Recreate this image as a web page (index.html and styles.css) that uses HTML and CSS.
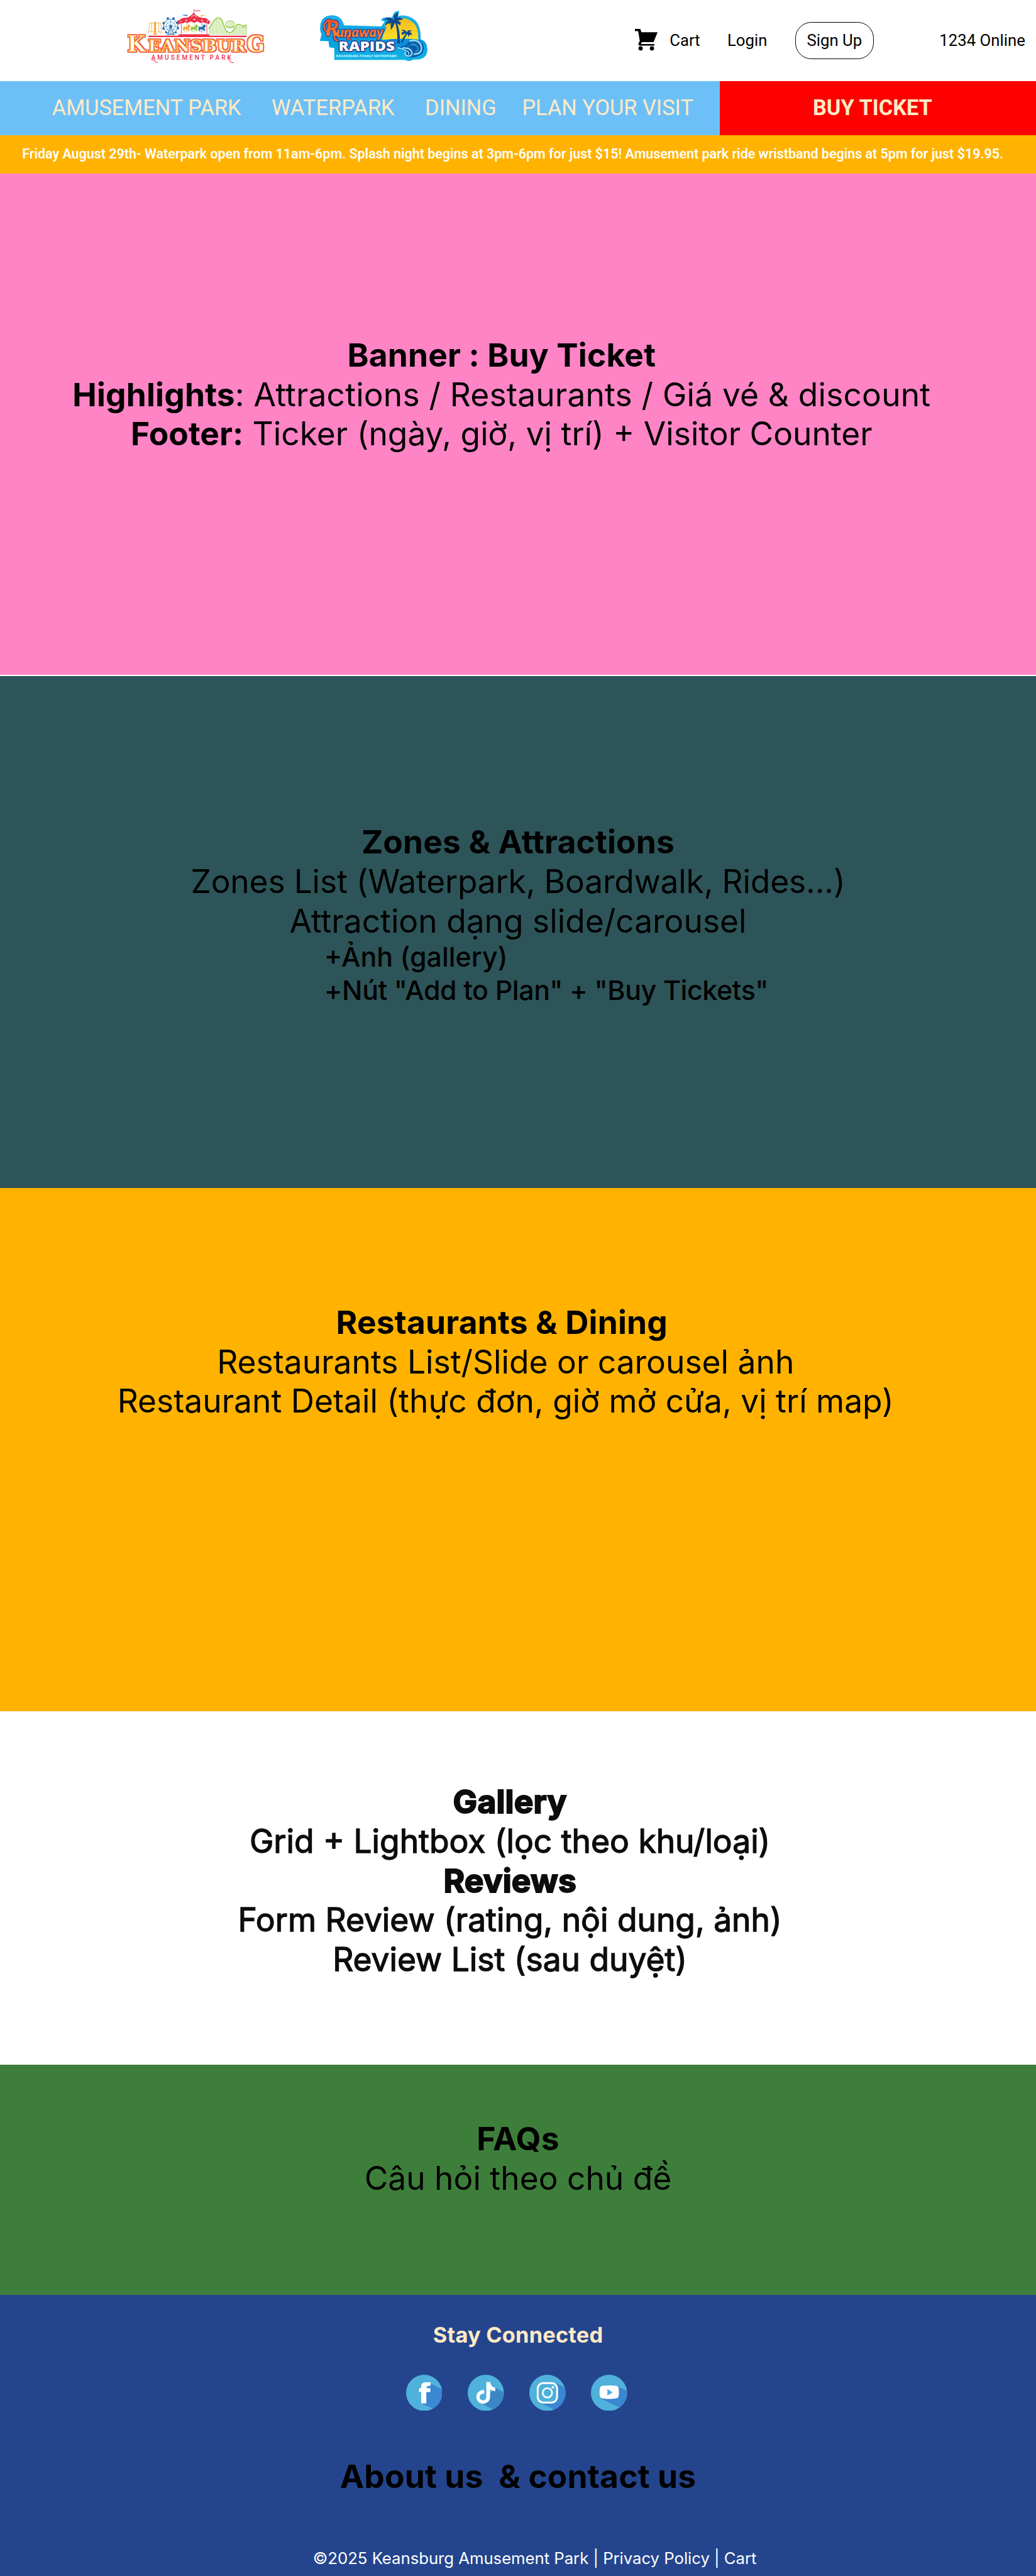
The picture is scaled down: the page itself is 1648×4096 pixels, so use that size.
FILE: index.html
```html
<!DOCTYPE html>
<html lang="vi">
<head>
<meta charset="utf-8">
<title>Keansburg Amusement Park</title>
<link rel="stylesheet" href="styles.css">
</head>
<body>
<header class="top">
  <svg class="logo-park" viewBox="100 45 785 310" role="img" aria-label="Keansburg Amusement Park">
    <defs>
      <filter id="red-rim" x="-5%" y="-10%" width="110%" height="120%"><feMorphology in="SourceAlpha" operator="dilate" radius="4"/><feComposite operator="in" in2="rim"/><feFlood flood-color="#ee3048" result="c"/><feMorphology in="SourceAlpha" operator="dilate" radius="4" result="d"/><feComposite in="c" in2="d" operator="in" result="r"/><feMerge><feMergeNode in="r"/><feMergeNode in="SourceGraphic"/></feMerge></filter>
    </defs>
    <!-- swing ride -->
    <g stroke="#f6a93b" fill="none" stroke-width="3">
      <path d="M228 128H300M263 120V190M232 128L228 178M244 128V176M284 128V176M295 128L300 178M214 176q10 8 22 0M236 174q8 8 18 0M274 174q8 8 18 0M286 180q10 8 20 0"/>
      <path d="M263 122V190" stroke-width="11"/><path d="M253 190H274" stroke-width="6"/>
    </g>
    <!-- ferris wheel -->
    <g stroke="#1f6cab" fill="none" stroke-width="3">
      <circle cx="350" cy="146" r="40"/><circle cx="350" cy="146" r="26" stroke-width="2"/>
      <path d="M350 146L332 194M350 146L369 194M330 192H373" stroke-width="4"/>
      <path d="M310 146H390M350 106V186M322 118L378 174M378 118L322 174" stroke-width="2"/>
    </g>
    <g fill="#1f6cab"><circle cx="350" cy="146" r="8"/><circle cx="334" cy="103" r="7"/><circle cx="366" cy="103" r="7"/><circle cx="386" cy="126" r="7"/><circle cx="311" cy="128" r="7"/><circle cx="310" cy="158" r="7"/><circle cx="390" cy="156" r="7"/><circle cx="325" cy="180" r="6"/><circle cx="378" cy="180" r="6"/></g>
    <!-- roller coaster -->
    <g stroke="#8dc63f" fill="none" stroke-width="3">
      <path d="M560 160C585 130 592 98 617 98C648 98 640 180 680 180C708 180 705 134 726 134C745 134 742 150 758 142Q765 138 773 140" stroke-width="5"/>
      <ellipse cx="680" cy="134" rx="24" ry="19" stroke-width="4"/><path d="M658 148Q680 160 702 148M744 150Q760 156 773 148"/>
      <path d="M566 155V194M573 145V194M581 133V194M589 120V194M597 109V194M605 102V194M613 100V194M621 100V194M629 104V194M637 122V194M645 142V194M653 160V194M661 172V194M669 118V154M677 116V154M685 116V154M693 120V154M669 180V194M677 182V194M685 182V194M693 178V194M701 158V194M709 146V194M717 138V194M725 136V194M733 138V194M741 146V194M749 148V194M757 144V194M765 142V194M772 142V194" stroke-width="2.5"/>
    </g>
    <!-- carousel -->
    <path d="M478 50V72M478 54L494 58L516 57L504 62L478 60" stroke="#ee3048" stroke-width="2" fill="none"/>
    <path d="M410 83L442 82V90L425 86ZM442 90V96" fill="#1f6cab"/><path d="M517 84L550 82L532 87L517 92Z" fill="#f6a93b"/>
    <path d="M478 68Q484 82 500 90Q510 98 530 99Q552 98 556 110L570 118L562 136L552 128L540 128L530 122L515 128L500 118L480 126L460 118L444 128L430 122L418 130L406 128L394 138L386 116L402 110Q406 98 430 98Q450 98 458 88Q472 82 478 68Z" fill="#ee3048"/>
    <path d="M465 96Q470 84 480 84Q490 84 494 96" fill="none" stroke="#fff" stroke-width="3"/>
    <g fill="#fff"><circle cx="437" cy="113" r="4"/><circle cx="481" cy="108" r="4"/><circle cx="524" cy="113" r="4"/><circle cx="407" cy="118" r="3"/><circle cx="554" cy="118" r="3"/></g>
    <path d="M409 128V188M551 128V188" stroke="#ee3048" stroke-width="3"/>
    <g stroke-width="2.5">
      <g stroke="#f6a93b" fill="#f6a93b"><path d="M438 126V182"/><path d="M416 156L424 148L434 152L444 148L448 136L457 140L457 150L451 152L450 162L456 166L450 172L444 162L428 162L424 168L430 174L424 172L419 164L424 154Z"/></g>
      <g stroke="#8dc63f" fill="#8dc63f"><path d="M481 126V182"/><path d="M459 156L467 148L477 152L487 148L491 136L500 140L500 150L494 152L493 162L499 166L493 172L487 162L471 162L467 168L473 174L467 172L462 164L467 154Z"/></g>
      <g stroke="#1f6cab" fill="#1f6cab"><path d="M524 126V182"/><path d="M502 156L510 148L520 152L530 148L534 136L543 140L543 150L537 152L536 162L542 166L536 172L530 162L514 162L510 168L516 174L510 172L505 164L510 154Z"/></g>
    </g>
    <path d="M226 198H394V190H564V198H771V206H226Z" fill="#ee3048"/>
    <g class="word" filter="url(#red-rim)"><text x="109" y="286" font-size="125" textLength="100" lengthAdjust="spacingAndGlyphs">K</text><text x="224" y="286" font-size="91" textLength="544" lengthAdjust="spacingAndGlyphs">EANSBUR</text><text x="773" y="286" font-size="125" textLength="100" lengthAdjust="spacingAndGlyphs">G</text></g>
    <g fill="#ee3048" class="tagline"><text x="242" y="332" font-size="35" textLength="298">AMUSEMENT</text><text x="567" y="332" font-size="35" textLength="120">PARK</text></g>
    <path d="M243 332Q258 332 262 340Q268 348 279 346M668 320Q676 348 702 349" fill="none" stroke="#ee3048" stroke-width="3.5"/>
  </svg>

  <svg class="logo-rapids" viewBox="95 55 605 290" role="img" aria-label="Runaway Rapids">
    <defs>
      <linearGradient id="sea" x1="0" y1="0" x2="0" y2="1"><stop offset="0" stop-color="#22b5ee"/><stop offset=".6" stop-color="#049fe0"/><stop offset="1" stop-color="#12b4e4"/></linearGradient>
      <linearGradient id="sun" x1="0" y1="0" x2="0" y2="1"><stop offset="0" stop-color="#f5b81c"/><stop offset="1" stop-color="#fbe02a"/></linearGradient>
      <linearGradient id="fire" gradientUnits="userSpaceOnUse" x1="0" y1="105" x2="0" y2="225"><stop offset="0" stop-color="#f04e23"/><stop offset="1" stop-color="#f8902a"/></linearGradient>
      <filter id="navy-rim" x="-10%" y="-20%" width="120%" height="140%"><feFlood flood-color="#283a8c" result="c"/><feMorphology in="SourceAlpha" operator="dilate" radius="4" result="d"/><feComposite in="c" in2="d" operator="in" result="r"/><feMerge><feMergeNode in="r"/><feMergeNode in="SourceGraphic"/></feMerge></filter>
    </defs>
    <path d="M98 226L108 188Q96 176 100 140Q106 86 165 84Q218 84 232 140L440 146L458 120L438 112L448 98L480 95L498 96L510 70Q520 58 540 61L532 88Q580 76 624 108Q660 140 658 218Q692 224 696 274Q694 326 640 330Q615 326 600 338Q585 340 570 332H178V266L150 262L146 228Z" fill="url(#sea)"/>
    <path d="M444 215Q446 200 468 154L456 138Q490 96 548 98Q640 108 645 190V220H444Z" fill="url(#sun)"/>
    <path d="M440 222Q540 208 640 218L650 250L530 262Z" fill="#0d8fd8"/>
    <g fill="#06498f">
      <path d="M516 122Q532 170 528 240H542Q546 170 524 120Z"/>
      <path d="M516 118Q498 88 462 100L455 112L474 106L470 114L488 112Q462 120 460 142L482 126L484 136L496 122Q488 140 494 166L508 142L512 128L530 130L544 140L548 124L530 114L562 106Q548 92 526 98Q538 78 530 66L512 82Q504 96 510 108Z"/>
      <path d="M580 184Q560 202 548 236H558Q572 204 586 186Z"/>
      <path d="M582 178Q566 156 550 168L568 174L552 180L554 194L574 184L574 196L586 188L590 206L598 190L610 196L606 180L594 178L612 168L588 168Z"/>
    </g>
    <path d="M526 258Q560 268 588 238Q620 208 656 228Q688 252 668 294Q640 322 590 318Q562 300 572 280Q550 264 526 258Z" fill="#0c5aa8"/>
    <g fill="none" stroke="#8fdcf8" stroke-linecap="round">
      <path d="M600 226Q650 216 662 256Q668 300 622 300" stroke-width="9"/>
      <path d="M608 242Q640 244 644 270Q642 284 630 284" stroke="#2f9fdd" stroke-width="6"/>
      <path d="M560 266Q600 262 610 290Q610 314 586 310Q566 304 574 288" stroke-width="8"/>
      <path d="M580 262Q608 240 634 256" stroke="#1c7fc8" stroke-width="6"/>
      <path d="M532 264Q558 270 582 282Q598 292 590 302" stroke="#fff" stroke-width="4"/>
    </g>
    <g class="script" filter="url(#navy-rim)">
      <path d="M148 184Q108 160 128 128Q136 112 152 110M176 178Q176 222 194 224M258 196Q244 216 264 216"/>
      <text x="130" y="200" font-size="120" textLength="74" lengthAdjust="spacingAndGlyphs">R</text>
      <text x="190" y="205" font-size="76" textLength="262" lengthAdjust="spacingAndGlyphs">unaway</text>
    </g>
    <text class="rapids" x="202" y="281" font-size="76" textLength="312" lengthAdjust="spacingAndGlyphs">RAPIDS</text>
    <text class="family" x="187" y="316" font-size="22" textLength="338" lengthAdjust="spacingAndGlyphs">KEANSBURG FAMILY WATERPARK</text>
  </svg>

  <a class="cart">
    <svg class="cart-icon" viewBox="0 0 42 40"><path d="M0 0H10L12 6H42L34.500 24.500H13L11 28H36V31H9Q5 30 7 26L9 22L6 4H0Z"/><circle cx="10.500" cy="36" r="4"/><circle cx="31.500" cy="36" r="4"/></svg>
    <span>Cart</span>
  </a>
  <a class="login">Login</a>
  <a class="signup">Sign Up</a>
  <span class="online">1234 Online</span>
</header>

<nav class="nav">
  <div class="links"><a>AMUSEMENT PARK</a><a>WATERPARK</a><a>DINING</a><a>PLAN YOUR VISIT</a></div>
  <a class="buy">BUY TICKET</a>
</nav>
<div class="ticker">Friday August 29th- Waterpark open from 11am-6pm. Splash night begins at 3pm-6pm for just $15! Amusement park ride wristband begins at 5pm for just $19.95.</div>

<section class="panel banner">
  <h2>Banner : Buy Ticket</h2>
  <p class="wide"><b>Highlights</b>: Attractions / Restaurants / Giá vé &amp; discount</p>
  <p><b>Footer:</b> Ticker (ngày, giờ, vị trí) + Visitor Counter</p>
</section>
<section class="panel zones">
  <h2>Zones &amp; Attractions</h2>
  <p class="tight">Zones List (Waterpark, Boardwalk, Rides...)</p>
  <p>Attraction dạng slide/carousel</p>
  <ul><li>+Ảnh (gallery)</li><li class="tight">+Nút "Add to Plan" + "Buy Tickets"</li></ul>
</section>
<section class="panel dining">
  <h2>Restaurants &amp; Dining</h2>
  <p>Restaurants List/Slide or carousel ảnh</p>
  <p>Restaurant Detail (thực đơn, giờ mở cửa, vị trí map)</p>
</section>
<section class="panel gallery">
  <h2>Gallery</h2>
  <p>Grid + Lightbox (lọc theo khu/loại)</p>
  <h2>Reviews</h2>
  <p>Form Review (rating, nội dung, ảnh)</p>
  <p>Review List (sau duyệt)</p>
</section>
<section class="panel faqs">
  <h2>FAQs</h2>
  <p>Câu hỏi theo chủ đề</p>
</section>
<footer class="footer">
  <h3>Stay Connected</h3>
  <div class="social">
    <svg viewBox="0 0 67 67"><circle cx="33.500" cy="33.500" r="33.500" fill="#50b1da"/><path d="M45 16L66 27A33.500 33.500 0 0 1 50 62.500L28 53Z" fill="#3a87d3"/><path d="M28 53V32H24V25H28C27 17 31 14 36 14H45.500V20.500H41Q37.500 20.500 37.500 25H45V32H37.500V53Z" fill="#fff"/></svg>
    <svg viewBox="0 0 67 67"><circle cx="33.500" cy="33.500" r="33.500" fill="#50b1da"/><path d="M51 24L67 33A33.500 33.500 0 0 1 47 64L25 53Z" fill="#3d86c6"/><path d="M34.500 13.500H41.500Q43 23 51 24V30.500Q45 30 41.500 27V41A12.700 12.700 0 1 1 30.500 28.500V35.500A6.200 6.200 0 1 0 34.500 41.500Z" fill="#fff"/></svg>
    <svg viewBox="0 0 67 67"><circle cx="33.500" cy="33.500" r="33.500" fill="#50b1da"/><path d="M50 16L66 24A33.500 33.500 0 0 1 46 64.500L20 52Z" fill="#3a87d3"/><rect x="15.500" y="15.500" width="36" height="36" rx="10" fill="#50b1da" stroke="#fff" stroke-width="3.500"/><circle cx="33.500" cy="33.500" r="8.700" fill="none" stroke="#fff" stroke-width="3"/><circle cx="43.700" cy="23.300" r="2.400" fill="#fff"/></svg>
    <svg viewBox="0 0 67 67"><circle cx="33.500" cy="33.500" r="33.500" fill="#50b1da"/><path d="M50 22L66 29A33.500 33.500 0 0 1 53 60.500L18 44Z" fill="#3a87d3"/><path d="M22 20.500Q33.500 19 46 20.500Q51 21 51.500 26Q52.500 33 51.500 39Q51 43.500 46 44Q33.500 45.500 22 44Q17 43.500 16.500 39Q15.500 33 16.500 26Q17 21 22 20.500Z" fill="#fff"/><path d="M30.500 26.500L40.500 32.500L30.500 38.500Z" fill="#50a8dc"/></svg>
  </div>
  <h2>About us&nbsp; &amp; contact us</h2>
  <p class="legal">©2025 Keansburg Amusement Park | Privacy Policy | Cart</p>
</footer>
</body>
</html>
```
FILE: styles.css
```css
/* 1rem = ten design units */
html { font-size: 8.58333px; }
* { box-sizing: border-box; }
body { margin: 0; background: #fff; color: #000; font-family: Inter, sans-serif; height: 4096px; overflow: hidden; display: flex; flex-direction: column; }
h2, h3, p, ul { margin: 0; padding: 0; }
ul { list-style: none; }
svg { display: block; flex: none; }
body > * { flex: none; }

.top { height: 15rem; display: flex; font: 3rem/3.6rem Roboto, sans-serif; white-space: nowrap; align-items: center; padding-left: 23.33rem; }
.logo-park { width: 26.17rem; height: 10.33rem; align-self: flex-start; margin-top: 1.5rem; }
.logo-rapids { width: 20.17rem; height: 9.67rem; align-self: flex-start; margin: 1.83rem 0 0 9.67rem; }
.cart { display: flex; align-items: center; gap: 2.2rem; width: 17.1rem; margin-left: 38.36rem; }
.cart-icon { width: 4.2rem; height: 4rem; margin-bottom: .2rem; }
.login { width: 12.6rem; }
.signup { width: 14.5rem; height: 6.8rem; border: 1px solid #000; border-radius: 3rem; display: flex; align-items: center; justify-content: center; }
.online { margin-left: 12.2rem; }

.word text { font-family: "DejaVu Serif", serif; font-weight: 700; fill: #fff; stroke: #f9ab3d; stroke-width: 5; stroke-linejoin: round; }
.tagline { font-family: Roboto, sans-serif; font-weight: 500; }
.script { fill: url(#fire); }
.script text { font-family: Lato, sans-serif; font-weight: 900; font-style: italic; }
.script path { fill: none; stroke: #f05f26; stroke-width: 9; stroke-linecap: round; }
.rapids { font-family: "Open Sans", sans-serif; font-weight: 800; fill: #fff; stroke: #283a8c; stroke-width: 10; paint-order: stroke; stroke-linejoin: round; }
.family { font-family: Lato, sans-serif; font-weight: 900; font-style: italic; fill: #c9f2ff; }

.nav { height: 10rem; display: flex; font: 4rem/10rem Roboto, sans-serif; color: #ffeac5; background: #6cc0f7; white-space: nowrap; }
.links { width: 133.4rem; padding-left: 9.65rem; display: flex; }
.links a { margin-right: 5.65rem; }
.links a:nth-child(3) { margin-right: 4.75rem; }
.buy { flex: 1; background: #f00; font-weight: 700; text-align: center; padding-right: 2rem; }
.ticker { height: 7.1rem; background: #ffb300; color: #fff; font: 600 2.5rem/7.1rem Roboto, sans-serif; padding-left: 4.1rem; white-space: nowrap; }

.panel { font-size: 6rem; line-height: 7.3rem; text-align: center; white-space: nowrap; }
h2 { font-size: 6rem; line-height: 7.3rem; font-weight: 700; letter-spacing: .02rem; }
.wide { letter-spacing: .02rem; }
.tight { letter-spacing: -.022rem; }
.banner { height: 93.1rem; background: #ff84c6; border-bottom: 2px solid #fff; padding: 30rem 6.1rem 0 0; }
.zones { height: 94.9rem; background: #2d5559; padding-top: 27.1rem; }
.zones ul { font-size: 5rem; line-height: 6.1rem; text-align: left; padding-left: 60.1rem; font-weight: 500; }
.zones li.tight { letter-spacing: -.045rem; }
.dining { height: 96.9rem; background: #ffb300; padding: 21.2rem 4.6rem 0 0; }
.dining h2 { margin-right: 1.4rem; }
.gallery { height: 65.5rem; background: #fff; color: #0c0c0c; padding: 13.1rem 3rem 0 0; -webkit-text-stroke: 1.3px #0c0c0c; }
.gallery h2 { -webkit-text-stroke-width: 2px; }
.faqs { height: 42.6rem; background: #3e7e3b; padding-top: 10rem; }

.footer { height: 52.1rem; background: #24458d; display: flex; flex-direction: column; align-items: center; padding-top: 5rem; white-space: nowrap; }
.footer h3 { font-size: 4rem; line-height: 4.8rem; font-weight: 700; letter-spacing: .025rem; color: #ffeac5; }
.social { display: flex; gap: 4.73rem; margin: 5rem 0 0 -.5rem; }
.social svg { width: 6.7rem; height: 6.7rem; }
.footer h2 { margin-top: 8.5rem; }
.legal { color: #fff; font-size: 3rem; line-height: 3.6rem; letter-spacing: -.005rem; margin: 9.75rem 0 0 6.2rem; }
```
